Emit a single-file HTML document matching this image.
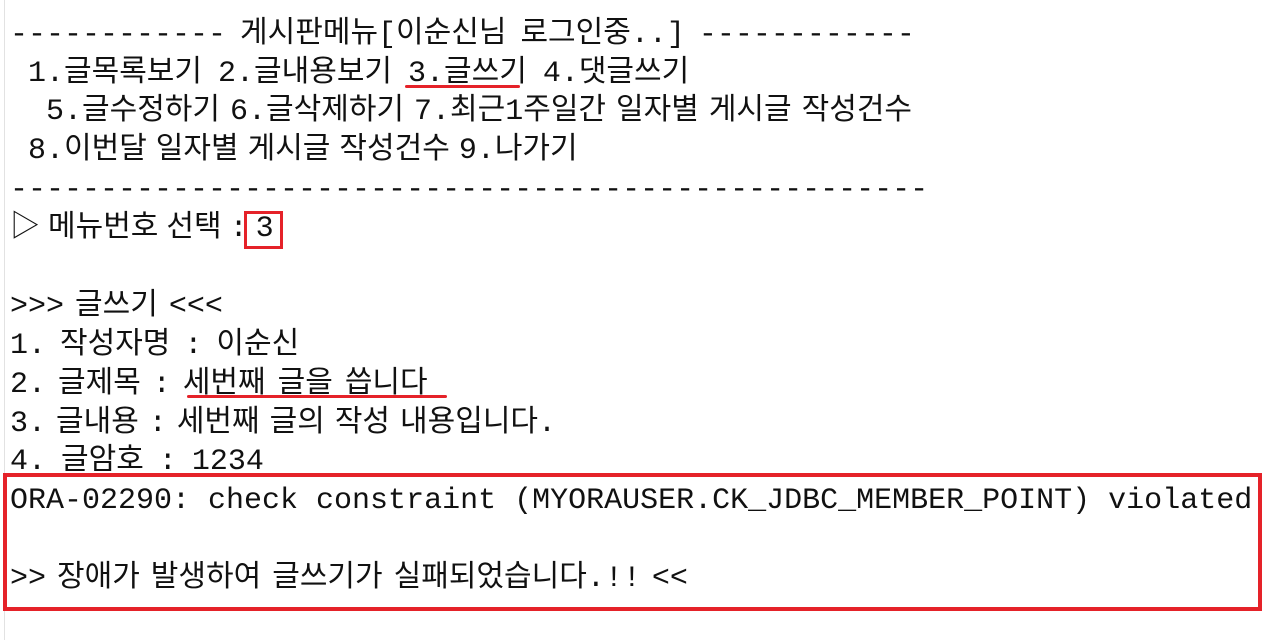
<!DOCTYPE html>
<html><head><meta charset="utf-8"><style>
html,body{margin:0;padding:0;background:#fff;}
body{width:1281px;height:640px;position:relative;overflow:hidden;}
.t{position:absolute;left:10px;font-family:"Liberation Mono","Noto Sans CJK KR","DejaVu Sans Mono",monospace;font-size:30px;line-height:39px;color:#111;white-space:pre;}
.r{position:absolute;border:3px solid #e52229;box-sizing:border-box;}
.u{position:absolute;height:3px;background:#e52229;border-radius:2px;}
</style></head><body>
<div style="position:absolute;left:4px;top:0;width:1px;height:640px;background:#e2e2e2"></div>
<div class="t" style="top:16px;word-spacing:-4px">------------ 게시판메뉴[이순신님 로그인중..] ------------</div>
<div class="t" style="top:55px;left:28px;word-spacing:-2px">1.글목록보기 2.글내용보기 3.글쓰기 4.댓글쓰기</div>
<div class="t" style="top:93px;left:46px;word-spacing:-8px">5.글수정하기 6.글삭제하기 7.최근1주일간 일자별 게시글 작성건수</div>
<div class="t" style="top:132px;left:28px;word-spacing:-9px">8.이번달 일자별 게시글 작성건수 9.나가기</div>
<div class="t" style="top:171px">---------------------------------------------------</div>
<div class="t" style="top:210px;word-spacing:-10px">▷ 메뉴번호 선택 : 3</div>
<div class="t" style="top:288px;word-spacing:-7px">&gt;&gt;&gt; 글쓰기 &lt;&lt;&lt;</div>
<div class="t" style="top:327px;word-spacing:-4px">1. 작성자명 : 이순신</div>
<div class="t" style="top:366px;word-spacing:-6px">2. 글제목 : 세번째 글을 씁니다</div>
<div class="t" style="top:405px;word-spacing:-8px">3. 글내용 : 세번째 글의 작성 내용입니다.</div>
<div class="t" style="top:443px;word-spacing:-3px">4. 글암호 : 1234</div>
<div class="t" style="top:482px">ORA-02290: check constraint (MYORAUSER.CK_JDBC_MEMBER_POINT) violated</div>
<div class="t" style="top:560px;word-spacing:-7px">&gt;&gt; 장애가 발생하여 글쓰기가 실패되었습니다.!! &lt;&lt;</div>
<div class="r" style="left:244px;top:211px;width:39px;height:38px"></div>
<div class="u" style="left:405px;top:85px;width:115px"></div>
<div class="u" style="left:187px;top:395px;width:260px"></div>
<div class="r" style="left:3px;top:473px;width:1259px;height:138px;border-width:4px"></div>
</body></html>
